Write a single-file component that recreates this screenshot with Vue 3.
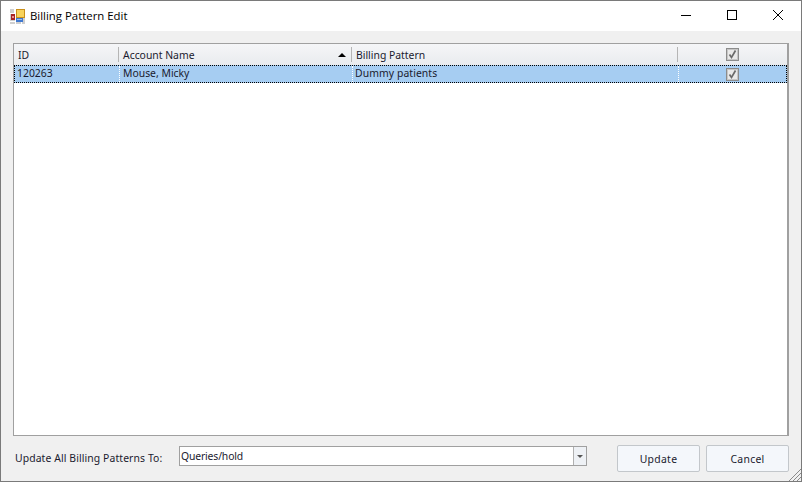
<template>
  <div class="window">
    <header class="titlebar">
      <svg class="app-icon" width="15" height="15" viewBox="0 0 15 15">
        <rect x="0" y="0" width="15" height="15" fill="#cfcfcf" />
        <path d="M0 4.5h6M0 12.5h6M4.5 0v5M11.5 13v2M5.5 0v15" stroke="#fff" fill="none" />
        <rect x="6" y="0" width="9" height="9" fill="#c98f1a" />
        <rect x="7" y="1" width="7" height="7" fill="#f8d35c" />
        <rect x="1" y="5" width="4" height="6" fill="#a82424" />
        <rect x="2" y="7" width="2" height="2" fill="#e89090" />
        <rect x="6" y="9" width="7" height="4" fill="#3f78d0" />
        <rect x="7" y="10" width="5" height="1" fill="#9cc0ee" />
      </svg>
      <span class="title">Billing Pattern Edit</span>
      <div class="controls">
        <button class="ctl"><svg width="12" height="12" viewBox="0 0 12 12"><path d="M1 5.5h10" stroke="#000" fill="none" /></svg></button>
        <button class="ctl"><svg width="12" height="12" viewBox="0 0 12 12"><rect x="1.5" y="0.5" width="9" height="9" stroke="#000" fill="none" /></svg></button>
        <button class="ctl"><svg width="12" height="12" viewBox="0 0 12 12"><path d="M1 0l10 10M11 0L1 10" stroke="#000" stroke-width="1" fill="none" /></svg></button>
      </div>
    </header>
    <main class="body">
      <section class="grid">
        <div class="head cols">
          <div class="hc c-id"><span>ID</span></div>
          <div class="hc c-name"><span>Account Name</span><i class="sort"></i></div>
          <div class="hc c-pat"><span>Billing Pattern</span></div>
          <div class="hc c-chk"><span class="check"><svg width="11" height="11" viewBox="0 0 11 11"><path d="M2.5 5.5l2 3L8.5 1.5" stroke="#6a6a6a" stroke-width="1.7" fill="none" /></svg></span></div>
        </div>
        <div class="row cols">
          <div class="rc c-id">120263</div>
          <div class="rc c-name">Mouse, Micky</div>
          <div class="rc c-pat">Dummy patients</div>
          <div class="rc c-chk"><span class="check"><svg width="11" height="11" viewBox="0 0 11 11"><path d="M2.5 5.5l2 3L8.5 1.5" stroke="#6a6a6a" stroke-width="1.7" fill="none" /></svg></span></div>
        </div>
      </section>
      <footer class="foot">
        <label class="lbl">Update All Billing Patterns To:</label>
        <div class="combo">
          <span class="val">Queries/hold</span>
          <span class="drop"><i></i></span>
        </div>
        <div class="btns">
          <button class="btn">Update</button>
          <button class="btn">Cancel</button>
        </div>
      </footer>
    </main>
    <svg class="grip" width="13" height="13" viewBox="0 0 13 13"><path d="M13 1L1 13M13 5L5 13M13 9L9 13" stroke="#8a8a8a" fill="none" /></svg>
  </div>
</template>

<script setup>
</script>

<style>
html, body { margin: 0; background: #f0f0f0; }
</style>

<style scoped>
.window {
  position: relative;
  box-sizing: border-box;
  width: 802px;
  height: 482px;
  border: 1px solid #7a7a7a;
  display: flex;
  flex-direction: column;
  background: #f0f0f0;
  font-family: "Noto Sans", sans-serif;
  font-size: 10.4px;
  color: #1a1a2e;
  overflow: hidden;
}
.titlebar {
  height: 30px;
  flex: none;
  background: #fff;
  display: flex;
  align-items: center;
  padding-left: 9px;
}
.app-icon { flex: none; }
.title {
  margin-left: 5px;
  margin-top: -1px;
  font-family: "Open Sans", sans-serif;
  font-size: 11.4px;
  color: #000;
}
.controls { margin-left: auto; display: flex; }
.ctl {
  width: 46px;
  height: 30px;
  padding: 0;
  border: 0;
  background: none;
  display: flex;
  align-items: center;
  justify-content: center;
}
.body {
  flex: 1;
  min-height: 0;
  display: flex;
  flex-direction: column;
  padding: 12px 12px 9px;
}
.grid {
  flex: 1;
  min-height: 0;
  border: 1px solid #a0a0a0;
  border-right: 2px solid #a0a0a0;
  background: #fff;
}
.cols {
  display: grid;
  grid-template-columns: 105px 233px 326px 1fr;
}
.head {
  height: 21px;
  background: linear-gradient(#f5f6f8, #e9ebee);
  box-sizing: border-box;
}
.hc {
  display: flex;
  align-items: center;
  position: relative;
  padding-left: 4px;
  box-sizing: border-box;
}
.hc + .hc::before {
  content: "";
  position: absolute;
  left: -1px;
  top: 3px;
  bottom: 3px;
  width: 1px;
  background: #b5b5b5;
}
.sort {
  position: absolute;
  right: 6px;
  top: 9px;
  width: 0;
  height: 0;
  border-left: 4px solid transparent;
  border-right: 4px solid transparent;
  border-bottom: 4px solid #000;
}
.row {
  height: 18px;
  background: #a6cdf2;
  box-sizing: border-box;
  border: 1px dotted #000;
}
.rc {
  display: flex;
  align-items: center;
  padding: 0 0 2px 2px;
  box-sizing: border-box;
  position: relative;
}
.rc + .rc { border-left: 1px dotted #fff; margin-left: -1px; }
.rc.c-name { padding-left: 3px; }
.rc.c-pat { letter-spacing: 0.08px; }
.hc.c-chk, .rc.c-chk { justify-content: center; padding: 0; }
.check {
  box-sizing: border-box;
  width: 13px;
  height: 13px;
  border: 1px solid #8c8c8c;
  outline: 1px solid #c6c6c6;
  outline-offset: -2px;
  background: #e9e9e9;
  display: flex;
  align-items: center;
  justify-content: center;
}
.foot {
  flex: none;
  display: flex;
  align-items: center;
  margin-top: 9px;
  height: 27px;
}
.lbl { margin-left: 2px; width: 164px; flex: none; white-space: nowrap; padding-bottom: 1px; letter-spacing: 0.1px; }
.combo {
  box-sizing: border-box;
  width: 408px;
  height: 20px;
  flex: none;
  background: #fff;
  border: 1px solid #a0a0a0;
  display: flex;
  align-items: center;
  justify-content: space-between;
  margin-top: -5px;
}
.val { padding-left: 1px; padding-bottom: 1px; letter-spacing: -0.15px; }
.drop {
  width: 13px;
  align-self: stretch;
  box-sizing: border-box;
  border-left: 1px solid #b0b0b0;
  background: #eef1f5;
  display: flex;
  align-items: center;
  justify-content: center;
}
.drop i {
  width: 0;
  height: 0;
  border-left: 3px solid transparent;
  border-right: 3px solid transparent;
  border-top: 3px solid #555;
}
.btns { margin-left: auto; display: flex; gap: 6px; }
.btn {
  box-sizing: border-box;
  width: 83px;
  height: 27px;
  padding: 0;
  background: #f4f7fb;
  border: 1px solid #c3c7cb;
  border-radius: 2px;
  font: inherit;
  letter-spacing: 0.3px;
  color: inherit;
}
.grip { position: absolute; right: 0; bottom: 0; }
</style>
